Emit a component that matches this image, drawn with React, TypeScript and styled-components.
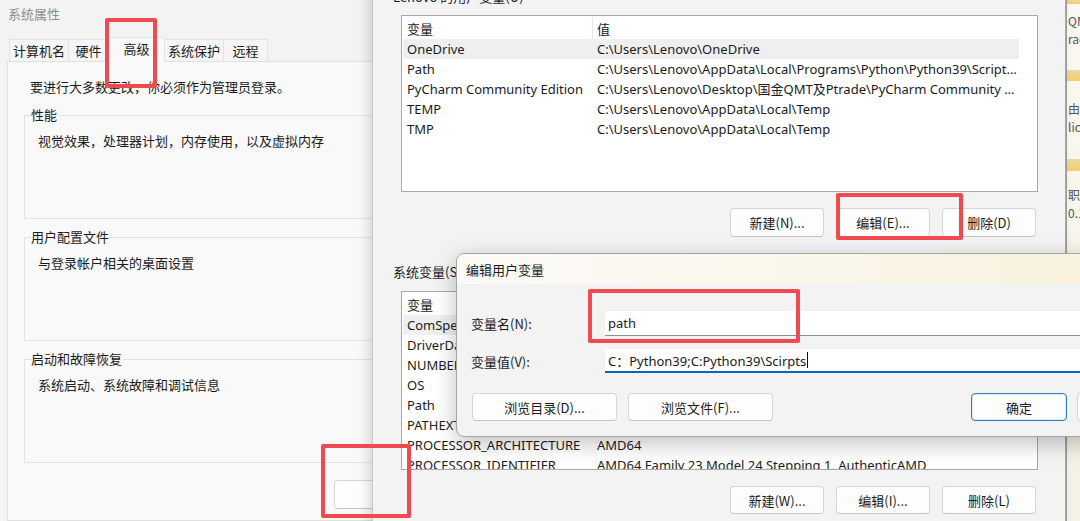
import React from "react";
import styled, { createGlobalStyle, css } from "styled-components";

const GlobalStyle = createGlobalStyle`
  html, body { margin: 0; padding: 0; }
  body {
    width: 1080px;
    height: 521px;
    overflow: hidden;
    font-family: "Noto Sans", "Noto Sans CJK SC", sans-serif;
    font-size: 13px;
    color: #1b1b1b;
    background: #f3f3f3;
  }
  * { box-sizing: border-box; }
`;

const cjk = css`
  font-family: "Noto Sans CJK SC", "Noto Sans", sans-serif;
`;

const Desktop = styled.div`
  position: relative;
  display: flex;
  width: 1080px;
  height: 521px;
  overflow: hidden;
  background: #f7f5ee;
`;

/* ---------- 系统属性 window ---------- */
const SysWindow = styled.div`
  flex: 0 0 372px;
  display: flex;
  flex-direction: column;
  background: #f3f3f3;
  overflow: hidden;
`;

const SysTitle = styled.div`
  ${cjk};
  height: 26px;
  padding-left: 8px;
  display: flex;
  align-items: center;
  color: #8e8e8e;
  font-size: 13px;
`;

const TabStrip = styled.div`
  ${cjk};
  margin-top: 13px;
  height: 22px;
  padding-left: 9px;
  display: flex;
  align-items: flex-end;
  position: relative;
  z-index: 1;
`;

const Tab = styled.div<{ $w: number; $active?: boolean }>`
  width: ${(p) => p.$w}px;
  height: 22px;
  display: flex;
  align-items: center;
  justify-content: center;
  font-size: 13px;
  color: #1b1b1b;
  background: #f5f5f5;
  border: 1px solid #e2e2e2;
  border-bottom: none;
  margin-right: -1px;
  ${(p) =>
    p.$active &&
    css`
      height: 25px;
      margin-bottom: -1px;
      background: #f9f9f9;
      border-color: #e6e6e6;
      padding-bottom: 3px;
    `}
`;

const TabPanel = styled.div`
  ${cjk};
  flex: 1;
  width: 420px;
  margin-left: 7px;
  background: #f9f9f9;
  border: 1px solid #e0e0e0;
  padding: 15px 0 0 16px;
  display: flex;
  flex-direction: column;
`;

const Notice = styled.div`
  line-height: 20px;
  margin-left: 6px;
`;

const GroupBox = styled.div`
  position: relative;
  height: 104px;
  margin-top: 18px;
  border: 1px solid #e2e2e2;
  padding: 15px 0 0 13px;
  &:first-of-type {
    margin-top: 20px;
  }
`;

const Legend = styled.span`
  position: absolute;
  top: -11px;
  left: 6px;
  line-height: 20px;
  padding-right: 1px;
  background: #f9f9f9;
`;

const GroupText = styled.div`
  line-height: 20px;
`;

const Button = styled.button<{ $w: number; $primary?: boolean; $h?: number }>`
  ${cjk};
  width: ${(p) => p.$w}px;
  height: ${(p) => p.$h ?? 29}px;
  flex: 0 0 auto;
  font-size: 13px;
  color: #1b1b1b;
  background: #fdfdfd;
  border: 1px solid #d6d6d6;
  border-bottom-color: #c4c4c4;
  border-radius: 4px;
  padding: 0;
  ${(p) =>
    p.$primary &&
    css`
      border: 1px solid #2f7fc6;
      box-shadow: inset 0 0 0 1px #dbe9f6;
    `}
`;

const EnvVarButton = styled(Button)`
  margin-top: 17px;
  margin-left: 310px;
`;

/* ---------- 环境变量 window ---------- */
const EnvWindow = styled.div`
  flex: 0 0 694px;
  margin-top: -30px;
  height: 570px;
  position: relative;
  z-index: 1;
  background: #f3f3f3;
  border-left: 1px solid #c8c8c8;
  border-right: 1px solid #a8a8a8;
  box-shadow: -4px 0 10px rgba(0, 0, 0, 0.14);
  padding: 17px 0 0 20px;
  display: flex;
  flex-direction: column;
`;

const SectionLabel = styled.div<{ $gap?: number }>`
  ${cjk};
  line-height: 20px;
  margin-top: ${(p) => p.$gap ?? 0}px;
`;

const ListBox = styled.div<{ $h: number; $gap: number }>`
  position: relative;
  width: 637px;
  height: ${(p) => p.$h}px;
  margin: ${(p) => p.$gap}px 0 0 8px;
  background: #ffffff;
  border: 1px solid #a9a9a9;
  padding-top: 1px;
  overflow: hidden;
`;

const HeaderRow = styled.div`
  display: grid;
  grid-template-columns: 190px 1fr;
  height: 22px;
  margin: 0 18px 0 1px;
  align-items: stretch;
`;

const HeaderCell = styled.div<{ $divider?: boolean }>`
  ${cjk};
  display: flex;
  align-items: center;
  padding-left: 4px;
  ${(p) => p.$divider && "border-right: 1px solid #e6e6e6;"}
`;

const Row = styled.div<{ $selected?: boolean }>`
  display: grid;
  grid-template-columns: 190px 1fr;
  height: 20px;
  margin: 0 18px 0 1px;
  align-items: center;
  background: ${(p) => (p.$selected ? "#efefef" : "transparent")};
`;

const Cell = styled.div<{ $value?: boolean }>`
  padding-left: 4px;
  ${(p) => p.$value && "padding-left: 4px;"}
  white-space: nowrap;
  overflow: hidden;
  text-overflow: ellipsis;
  line-height: 20px;
  font-family: "Noto Sans", "Noto Sans CJK SC", sans-serif;
`;

const ScrollThumb = styled.div`
  position: absolute;
  right: 3px;
  top: 24px;
  width: 3px;
  height: 110px;
  border-radius: 2px;
  background: #c9c9c9;
`;

const ButtonRow = styled.div<{ $gap?: number }>`
  width: 637px;
  margin: ${(p) => p.$gap ?? 16}px 0 0 8px;
  padding-right: 2px;
  display: flex;
  justify-content: flex-end;
  gap: 12px;
`;

/* ---------- right desktop strip ---------- */
const Strip = styled.div`
  flex: 1;
  display: flex;
  flex-direction: column;
  overflow: hidden;
  background: linear-gradient(180deg, #faf8f0, #f4f1e6);
  border-left: 1px solid #9f9f9f;
  font-size: 12px;
  color: #555;
  white-space: nowrap;
  ${cjk};
`;

const StripBar = styled.div<{ $h: number; $gap: number }>`
  height: ${(p) => p.$h}px;
  margin-top: ${(p) => p.$gap}px;
  background: linear-gradient(180deg, #e9d9a8, #f5cf63);
  flex: 0 0 auto;
`;

const StripText = styled.div<{ $gap?: number }>`
  line-height: 18px;
  margin-top: ${(p) => p.$gap ?? 0}px;
  padding-left: 1px;
`;

/* ---------- 编辑用户变量 dialog ---------- */
const Dialog = styled.div`
  position: absolute;
  left: 456px;
  top: 253px;
  width: 734px;
  height: 184px;
  z-index: 2;
  display: flex;
  flex-direction: column;
  background: #f3f3f3;
  border: 1px solid #a4a4a4;
  border-radius: 8px;
  box-shadow: 0 6px 22px rgba(0, 0, 0, 0.26);
  overflow: hidden;
`;

const DialogTitle = styled.div`
  ${cjk};
  height: 30px;
  padding-left: 9px;
  display: flex;
  align-items: center;
  font-size: 13px;
  color: #1b1b1b;
  background: linear-gradient(90deg, #fbfaf6 0%, #f9f5e8 55%, #f6efd8 100%);
`;

const DialogBody = styled.div`
  padding: 27px 16px 0 14px;
  display: flex;
  flex-direction: column;
`;

const FieldRow = styled.div<{ $h: number; $gap?: number }>`
  display: grid;
  grid-template-columns: 134px 1fr;
  align-items: center;
  height: ${(p) => p.$h}px;
  margin-top: ${(p) => p.$gap ?? 0}px;
`;

const FieldLabel = styled.div`
  ${cjk};
  font-size: 13px;
`;

const TextBox = styled.div<{ $focused?: boolean }>`
  height: 100%;
  display: flex;
  align-items: center;
  padding-left: 3px;
  background: #ffffff;
  border-bottom: 1px solid #8f8f8f;
  font-family: "Noto Sans", "Noto Sans CJK SC", sans-serif;
  font-size: 13px;
  white-space: nowrap;
  ${(p) =>
    p.$focused &&
    css`
      border-bottom: 2px solid #0067c0;
      padding-bottom: 0;
    `}
`;

const Caret = styled.span`
  display: inline-block;
  width: 1px;
  height: 16px;
  margin-left: 1px;
  background: #111;
`;

const DialogButtons = styled.div`
  margin-top: 20px;
  padding-left: 1px;
  display: flex;
  gap: 11px;
`;

const PushRight = styled.div`
  margin-left: auto;
  display: flex;
  gap: 10px;
`;

/* ---------- red annotation boxes ---------- */
const RedMark = styled.div<{ $x: number; $y: number; $w: number; $h: number }>`
  position: absolute;
  left: ${(p) => p.$x}px;
  top: ${(p) => p.$y}px;
  width: ${(p) => p.$w}px;
  height: ${(p) => p.$h}px;
  border: 4px solid #ee4a4f;
  border-radius: 2px;
  z-index: 10;
  pointer-events: none;
`;

const userVars: [string, string][] = [
  ["OneDrive", "C:\\Users\\Lenovo\\OneDrive"],
  ["Path", "C:\\Users\\Lenovo\\AppData\\Local\\Programs\\Python\\Python39\\Scripts\\;C:\\Users\\Lenovo\\AppData\\Local\\Programs\\Python\\Python39\\"],
  ["PyCharm Community Edition", "C:\\Users\\Lenovo\\Desktop\\国金QMT及Ptrade\\PyCharm Community Edition 2021\\bin;"],
  ["TEMP", "C:\\Users\\Lenovo\\AppData\\Local\\Temp"],
  ["TMP", "C:\\Users\\Lenovo\\AppData\\Local\\Temp"],
];

const sysVars: [string, string][] = [
  ["ComSpec", "C:\\WINDOWS\\system32\\cmd.exe"],
  ["DriverData", "C:\\Windows\\System32\\Drivers\\DriverData"],
  ["NUMBER_OF_PROCESSORS", "12"],
  ["OS", "Windows_NT"],
  ["Path", "C:\\WINDOWS\\system32;C:\\WINDOWS;C:\\WINDOWS\\System32\\Wbem"],
  ["PATHEXT", ".COM;.EXE;.BAT;.CMD;.VBS;.VBE;.JS;.JSE;.WSF;.WSH;.MSC"],
  ["PROCESSOR_ARCHITECTURE", "AMD64"],
  ["PROCESSOR_IDENTIFIER", "AMD64 Family 23 Model 24 Stepping 1, AuthenticAMD"],
  ["PROCESSOR_LEVEL", "23"],
];

function VarList({ rows, h, gap, scroll }: { rows: [string, string][]; h: number; gap: number; scroll?: boolean }) {
  return (
    <ListBox $h={h} $gap={gap}>
      <HeaderRow>
        <HeaderCell $divider>变量</HeaderCell>
        <HeaderCell>值</HeaderCell>
      </HeaderRow>
      {rows.map(([k, v], i) => (
        <Row key={k + i} $selected={i === 0}>
          <Cell>{k}</Cell>
          <Cell $value>{v}</Cell>
        </Row>
      ))}
      {scroll && <ScrollThumb />}
    </ListBox>
  );
}

export default function App() {
  return (
    <>
      <GlobalStyle />
      <Desktop>
        <SysWindow>
          <SysTitle>系统属性</SysTitle>
          <TabStrip>
            <Tab $w={60}>计算机名</Tab>
            <Tab $w={41}>硬件</Tab>
            <Tab $w={57} $active>高级</Tab>
            <Tab $w={60}>系统保护</Tab>
            <Tab $w={45}>远程</Tab>
          </TabStrip>
          <TabPanel>
            <Notice>要进行大多数更改，你必须作为管理员登录。</Notice>
            <GroupBox>
              <Legend>性能</Legend>
              <GroupText>视觉效果，处理器计划，内存使用，以及虚拟内存</GroupText>
            </GroupBox>
            <GroupBox>
              <Legend>用户配置文件</Legend>
              <GroupText>与登录帐户相关的桌面设置</GroupText>
            </GroupBox>
            <GroupBox>
              <Legend>启动和故障恢复</Legend>
              <GroupText>系统启动、系统故障和调试信息</GroupText>
            </GroupBox>
            <EnvVarButton $w={160}>环境变量(N)...</EnvVarButton>
          </TabPanel>
        </SysWindow>

        <EnvWindow>
          <SectionLabel>Lenovo 的用户变量(U)</SectionLabel>
          <VarList rows={userVars} h={177} gap={8} />
          <ButtonRow>
            <Button $w={94}>新建(N)...</Button>
            <Button $w={94}>编辑(E)...</Button>
            <Button $w={94}>删除(D)</Button>
          </ButtonRow>
          <SectionLabel $gap={25}>系统变量(S)</SectionLabel>
          <VarList rows={sysVars} h={179} gap={9} scroll />
          <ButtonRow>
            <Button $w={94} $h={28}>新建(W)...</Button>
            <Button $w={94} $h={28}>编辑(I)...</Button>
            <Button $w={94} $h={28}>删除(L)</Button>
          </ButtonRow>
        </EnvWindow>

        <Strip>
          <StripBar $h={4} $gap={0} />
          <StripText $gap={8}>QMT</StripText>
          <StripText>rade</StripText>
          <StripBar $h={11} $gap={22} />
          <StripText $gap={19}>由录</StripText>
          <StripText>lica</StripText>
          <StripBar $h={12} $gap={23} />
          <StripText $gap={15}>职务</StripText>
          <StripText>0.1</StripText>
        </Strip>

        <Dialog>
          <DialogTitle>编辑用户变量</DialogTitle>
          <DialogBody>
            <FieldRow $h={25}>
              <FieldLabel>变量名(N):</FieldLabel>
              <TextBox>path</TextBox>
            </FieldRow>
            <FieldRow $h={24} $gap={13}>
              <FieldLabel>变量值(V):</FieldLabel>
              <TextBox $focused>
                C：Python39;C:Python39\Scirpts
                <Caret />
              </TextBox>
            </FieldRow>
            <DialogButtons>
              <Button $w={145} $h={28}>浏览目录(D)...</Button>
              <Button $w={145} $h={28}>浏览文件(F)...</Button>
              <PushRight>
                <Button $w={96} $h={28} $primary>确定</Button>
                <Button $w={96} $h={28}>取消</Button>
              </PushRight>
            </DialogButtons>
          </DialogBody>
        </Dialog>

        <RedMark $x={105} $y={18} $w={52} $h={70} />
        <RedMark $x={836} $y={193} $w={127} $h={47} />
        <RedMark $x={588} $y={289} $w={212} $h={54} />
        <RedMark $x={321} $y={444} $w={90} $h={74} />
      </Desktop>
    </>
  );
}
